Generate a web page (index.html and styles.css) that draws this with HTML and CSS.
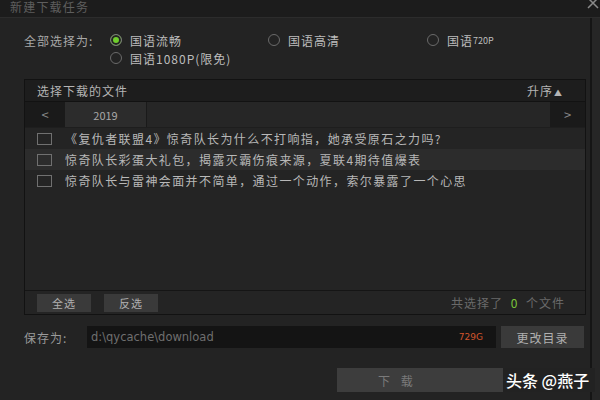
FILE: index.html
```html
<!DOCTYPE html>
<html lang="zh-CN">
<head>
    <meta charset="UTF-8">
    <title>新建下载任务</title>
    <link rel="stylesheet" href="styles.css">
</head>
<body>
    <div class="window">
        <div class="titlebar">
            <span class="title">新建下载任务</span>
            <svg class="close" width="12" height="10" viewBox="0 0 12 10">
                <path d="M1 -2 L11 8 M11 -2 L1 8" stroke="#8a8a8a" stroke-width="1.5" fill="none"/>
            </svg>
        </div>
        <div class="content">
            <div class="main">
                <div class="options">
                    <span class="opt-label">全部选择为:</span>
                    <label class="radio checked"><i></i>国语流畅</label>
                    <label class="radio"><i></i>国语高清</label>
                    <label class="radio"><i></i>国语<small>720P</small></label>
                    <span></span>
                    <label class="radio"><i></i>国语1080P(限免)</label>
                </div>

                <div class="panel">
                    <div class="panel-head">
                        <span>选择下载的文件</span>
                        <span class="sort">升序<b>▲</b></span>
                    </div>
                    <div class="tabs">
                        <div class="tab-arrow">&lt;</div>
                        <div class="tab active">2019</div>
                        <div class="tab-rest"></div>
                        <div class="tab-arrow right">&gt;</div>
                    </div>
                    <ul class="files">
                        <li><i class="box"></i>《复仇者联盟4》惊奇队长为什么不打响指，她承受原石之力吗?</li>
                        <li class="hover"><i class="box"></i>惊奇队长彩蛋大礼包，揭露灭霸伤痕来源，夏联4期待值爆表</li>
                        <li><i class="box"></i>惊奇队长与雷神会面并不简单，通过一个动作，索尔暴露了一个心思</li>
                    </ul>
                    <div class="panel-foot">
                        <button class="btn small">全选</button>
                        <button class="btn small">反选</button>
                        <span class="count">共选择了 <em>0</em> 个文件</span>
                    </div>
                </div>

                <div class="save-row">
                    <span class="save-label">保存为:</span>
                    <div class="path">
                        <span>d:\qycache\download</span>
                        <span class="free">729G</span>
                    </div>
                    <button class="btn dir">更改目录</button>
                </div>

                <div class="actions">
                    <button class="btn download">下 载</button>
                </div>
            </div>
            <div class="edge"></div>
        </div>
        <div class="watermark">头条 @燕子</div>
    </div>
</body>
</html>
```
FILE: styles.css
```css
body {
    margin: 0;
    background-color: #232323;
    font-family: "Noto Sans CJK SC", "Liberation Sans", sans-serif;
    font-size: 12px;
    color: #b4b4b4;
}
.window {
    position: relative;
    width: 600px;
    height: 400px;
    overflow: hidden;
    background-color: #232323;
}
.titlebar {
    height: 17px;
    background-color: #1c1c1c;
    border-bottom: 1px solid #2c2c2c;
    display: flex;
    justify-content: space-between;
    align-items: flex-start;
}
.title {
    margin-left: 10px;
    margin-top: 0;
    font-size: 12px;
    line-height: 13px;
    color: #5e5e5e;
    letter-spacing: 1.2px;
}
.close {
    margin-right: 1px;
}
.content {
    display: flex;
    height: 382px;
}
.main {
    width: 564px;
    padding-left: 24px;
}
.edge {
    margin-left: 4px;
    width: 8px;
    border-left: 2px solid #151515;
    background-color: #262626;
}

/* quality options */
.options {
    margin-top: 13px;
    display: grid;
    grid-template-columns: 86px 158px 159px 150px;
    grid-auto-rows: 18px;
    align-items: center;
    letter-spacing: 1px;
}
.opt-label {
    color: #a8a8a8;
}
.radio {
    display: flex;
    align-items: center;
    color: #bdbdbd;
}
.radio i {
    width: 10px;
    height: 10px;
    border: 1px solid #6a6a6a;
    border-radius: 50%;
    margin-right: 8px;
    box-sizing: content-box;
}
.radio.checked i {
    background-color: #6fce2c;
    box-shadow: inset 0 0 0 2px #232323;
    border-color: #7a7a7a;
}
.radio small {
    font-size: 9px;
    letter-spacing: 0;
}

/* file panel */
.panel {
    margin-top: 12px;
    height: 234px;
    border: 1px solid #121212;
    display: flex;
    flex-direction: column;
    background-color: #242424;
}
.panel-head {
    height: 21px;
    background-color: #1d1d1d;
    border-bottom: 1px solid #121212;
    display: flex;
    justify-content: space-between;
    align-items: center;
    padding: 0 22px 0 12px;
    letter-spacing: 1px;
}
.sort b {
    font-size: 8px;
    margin-left: 1px;
}
.tabs {
    height: 25px;
    display: flex;
    border-bottom: 1px solid #1e1e1e;
}
.tab-arrow {
    width: 40px;
    background-color: #1a1a1a;
    color: #888;
    display: flex;
    align-items: center;
    justify-content: center;
    font-size: 13px;
}
.tab-arrow.right {
    width: 35px;
}
.tab {
    width: 81px;
    border-right: 1px solid #1a1a1a;
    background-color: #2c2c2c;
    display: flex;
    align-items: center;
    justify-content: center;
    color: #a8a8a8;
    font-size: 11px;
}
.tab-rest {
    flex: 1;
    background-color: #262626;
}
.files {
    list-style: none;
    margin: 0;
    padding: 0;
    flex: 1;
}
.files li {
    height: 21px;
    display: flex;
    align-items: center;
    padding-left: 12px;
    letter-spacing: 1.4px;
    color: #b8b8b8;
}
.files li.hover {
    background-color: #2c2c2c;
}
.box {
    width: 13px;
    height: 10px;
    border: 1px solid #707070;
    margin-right: 13px;
}
.panel-foot {
    height: 23px;
    border-top: 1px solid #151515;
    display: flex;
    align-items: center;
    padding-left: 12px;
    padding-right: 20px;
}
.btn {
    border: none;
    background-color: #3a3a3a;
    color: #b0b0b0;
    font-family: inherit;
    font-size: 12px;
    letter-spacing: 1px;
    padding: 0;
}
.btn.small {
    width: 54px;
    height: 18px;
    margin-right: 13px;
    font-size: 11px;
}
.count {
    margin-left: auto;
    color: #6a6a6a;
    letter-spacing: 1px;
}
.count em {
    font-style: normal;
    color: #7bc43a;
    margin: 0 4px;
}

/* save path */
.save-row {
    margin-top: 11px;
    height: 22px;
    display: flex;
    align-items: center;
}
.save-label {
    width: 63px;
    color: #9a9a9a;
    letter-spacing: 1px;
}
.path {
    width: 409px;
    height: 22px;
    background-color: #141414;
    display: flex;
    align-items: center;
    justify-content: space-between;
    padding: 0 13px 0 4px;
    box-sizing: border-box;
    color: #6f6f6f;
    font-family: "DejaVu Sans", sans-serif;
    font-size: 11.5px;
}
.path .free {
    color: #d2542c;
    font-size: 9px;
}
.btn.dir {
    margin-left: 5px;
    width: 83px;
    height: 22px;
}

.actions {
    margin-top: 20px;
    padding-left: 313px;
}
.btn.download {
    width: 170px;
    height: 24px;
    background-color: #3d3d3d;
    color: #7a7a7a;
    text-align: left;
    padding-left: 41px;
    letter-spacing: 4px;
}

.watermark {
    position: absolute;
    left: 503px;
    top: 368px;
    height: 24px;
    padding: 0 6px 0 3px;
    background-color: #222;
    color: #fff;
    font-size: 16px;
    line-height: 24px;
    font-weight: 500;
}
```
